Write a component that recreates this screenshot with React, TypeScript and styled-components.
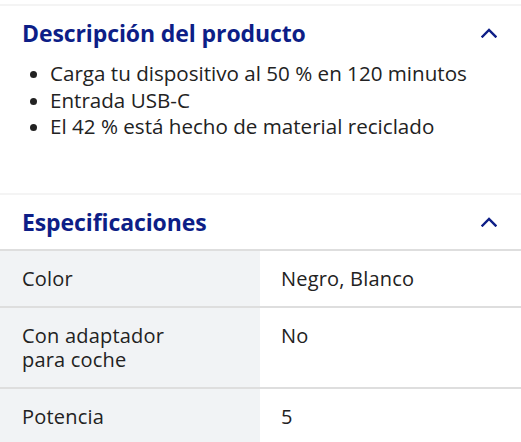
import styled, { createGlobalStyle } from "styled-components";

const GlobalStyle = createGlobalStyle`
  body {
    margin: 0;
    background: #ffffff;
    font-family: "Open Sans", "Noto Sans", sans-serif;
    color: #222222;
  }
`;

const descripcion = [
  "Carga tu dispositivo al 50 % en 120 minutos",
  "Entrada USB-C",
  "El 42 % está hecho de material reciclado",
];

const specs = [
  { label: "Color", value: "Negro, Blanco" },
  { label: "Con adaptador\npara coche", value: "No" },
  { label: "Potencia", value: "5" },
];

const Chevron = () => (
  <svg width="16" height="10" viewBox="0 0 16 10" fill="none">
    <path
      d="M1.5 8.5 L8 2 L14.5 8.5"
      stroke="#0d1e87"
      strokeWidth="2.4"
      strokeLinecap="square"
    />
  </svg>
);

const App = () => {
  return (
    <Page>
      <GlobalStyle />
      <Section>
        <Header>
          <Title>Descripción del producto</Title>
          <Chevron />
        </Header>
        <BulletList>
          {descripcion.map((d) => (
            <li key={d}>{d}</li>
          ))}
        </BulletList>
      </Section>
      <Section>
        <Header>
          <Title>Especificaciones</Title>
          <Chevron />
        </Header>
        <Table>
          {specs.map((s) => (
            <Row key={s.label}>
              <Label>{s.label}</Label>
              <Value>{s.value}</Value>
            </Row>
          ))}
        </Table>
      </Section>
    </Page>
  );
};

export default App;

const Page = styled.div`
  padding-top: 4px;
  width: 521px;
  height: 442px;
  overflow: hidden;
  box-sizing: border-box;
`;
const Section = styled.div`
  border-top: 2px solid #f4f4f4;
`;
const Header = styled.div`
  display: flex;
  justify-content: space-between;
  align-items: center;
  height: 54px;
  padding: 0 24px 0 22px;
`;
const Title = styled.h2`
  margin: 0;
  font-size: 23px;
  font-weight: 700;
  color: #0d1e87;
  letter-spacing: -0.1px;
`;
const BulletList = styled.ul`
  margin: 0;
  padding: 0 0 53px 50px;
  font-size: 20.6px;
  line-height: 26.5px;
  color: #222222;
  li::marker {
    font-size: 19px;
  }
`;
const Table = styled.div`
  border-top: 2px solid #dedede;
`;
const Row = styled.div`
  display: grid;
  grid-template-columns: 260px 1fr;
  border-bottom: 2px solid #dedede;
  font-size: 20px;
  line-height: 23.5px;
  letter-spacing: 0.2px;
  &:last-child {
    border-bottom: none;
  }
`;
const Label = styled.div`
  background: #f1f3f5;
  padding: 16px 22px;
  white-space: pre-line;
`;
const Value = styled.div`
  padding: 16px 21px;
`;
